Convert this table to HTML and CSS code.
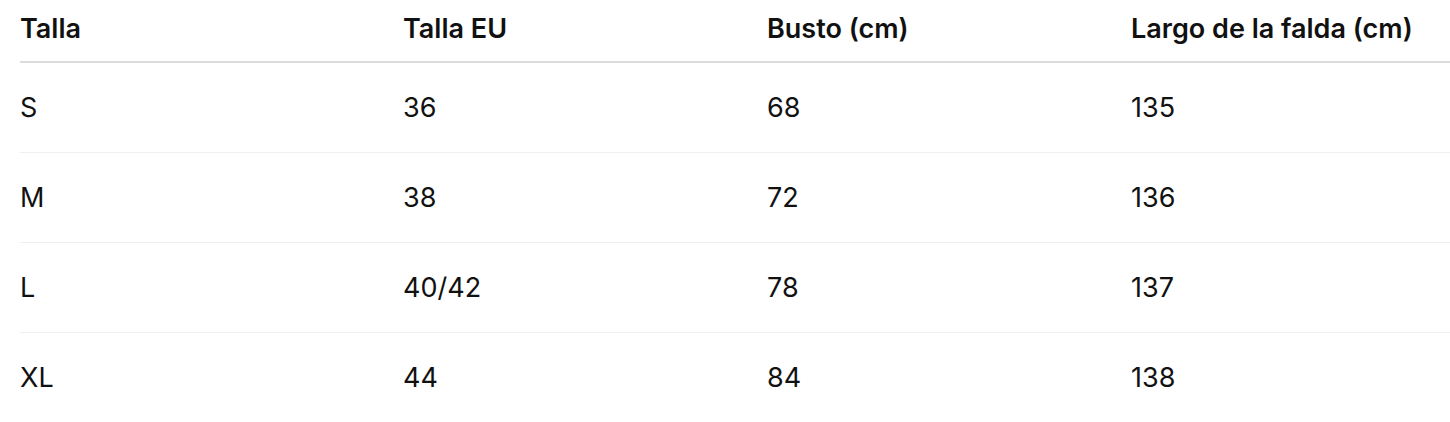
FILE: index.html
```html
<!DOCTYPE html>
<html lang="es">
<head>
<meta charset="utf-8">
<title>Tabla de tallas</title>
<link rel="stylesheet" href="styles.css">
</head>
<body>
<table class="size-table">
  <colgroup>
    <col class="c1"><col class="c2"><col class="c3"><col class="c4">
  </colgroup>
  <thead>
    <tr><th>Talla</th><th>Talla EU</th><th>Busto (cm)</th><th>Largo de la falda (cm)</th></tr>
  </thead>
  <tbody>
    <tr><td>S</td><td>36</td><td>68</td><td>135</td></tr>
    <tr><td>M</td><td>38</td><td>72</td><td>136</td></tr>
    <tr><td>L</td><td>40/42</td><td>78</td><td>137</td></tr>
    <tr><td>XL</td><td>44</td><td>84</td><td>138</td></tr>
  </tbody>
</table>
</body>
</html>
```

FILE: styles.css
```css
html, body {
  margin: 0;
  padding: 0;
  background: #ffffff;
}
body {
  font-family: Inter, "Noto Sans", sans-serif;
  color: #111111;
  overflow: hidden;
}
.size-table {
  margin-left: 20px;
  width: 1430px;
  border-collapse: collapse;
  table-layout: fixed;
}
.c1 { width: 383px; }
.c2 { width: 364px; }
.c3 { width: 364px; }
.c4 { width: auto; }
.size-table th {
  text-align: left;
  font-size: 27px;
  font-weight: 600;
  line-height: 36px;
  padding: 11px 0 14px 0;
  border-bottom: 2px solid #dcdcdc;
  white-space: nowrap;
}
.size-table td {
  font-size: 27px;
  font-weight: 400;
  line-height: 36px;
  padding: 27px 0 26px 0;
  border-bottom: 1px solid #efefef;
}
.size-table tbody tr:last-child td {
  border-bottom: none;
}
```
